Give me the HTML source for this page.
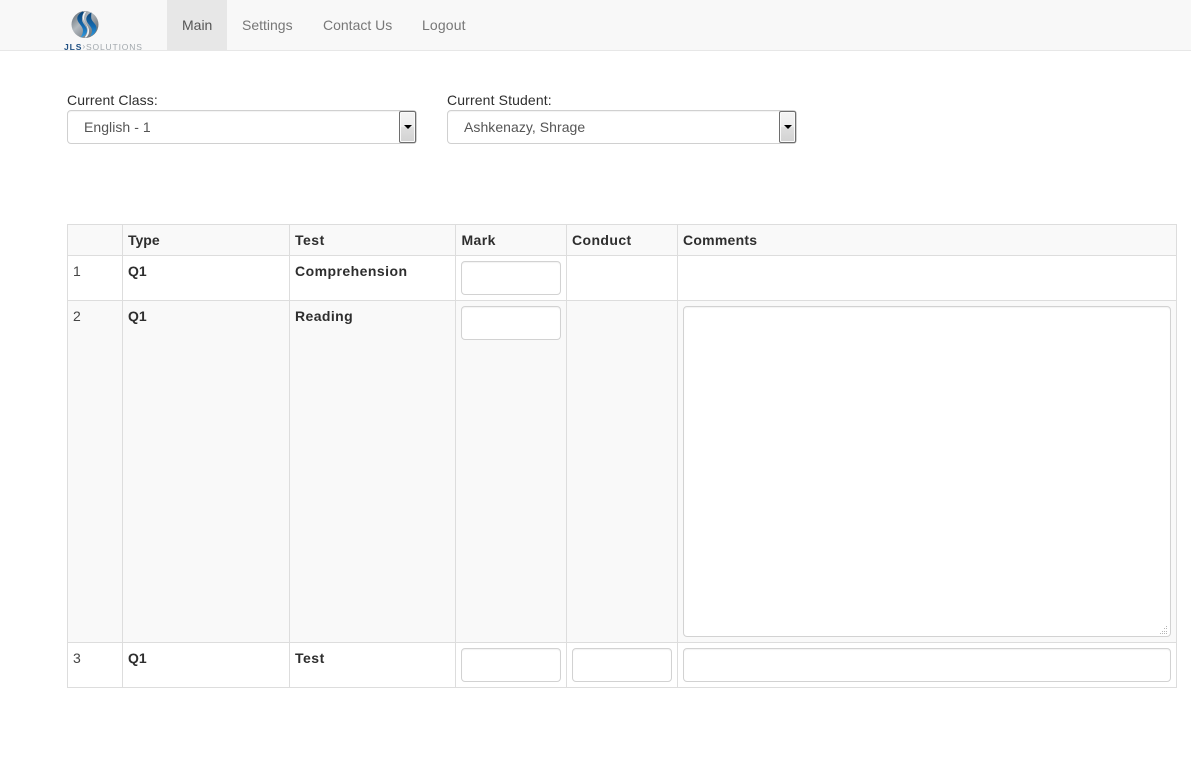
<!DOCTYPE html>
<html>
<head>
<meta charset="utf-8">
<style>
html,body{margin:0;padding:0;background:#fff;}
body{width:1191px;height:763px;position:relative;overflow:hidden;font-family:"Liberation Sans",sans-serif;font-size:14px;color:#2e2e2e;line-height:20px;}
.a{position:absolute;}
.nav{left:0;top:0;width:1191px;height:50px;background:#f8f8f8;border-bottom:1px solid #e7e7e7;}
.nl{position:absolute;top:15px;color:#777;white-space:nowrap;}
.active{position:absolute;left:167px;top:0;width:60px;height:50px;background:#e7e7e7;}
.sel{position:absolute;top:110px;width:350px;height:34px;box-sizing:border-box;border:1px solid #d0d0d0;border-radius:4px;background:#fff;box-shadow:inset 0 1px 1px rgba(0,0,0,.05);color:#555;}
.sel span{position:absolute;left:16px;top:6px;white-space:nowrap;letter-spacing:.05px;}
.btn{position:absolute;right:0;top:0;width:17px;height:32px;box-sizing:border-box;border:1px solid #6e6e6e;border-radius:2px;background:linear-gradient(#f4f4f4,#ececec 50%,#dedede 51%,#d2d2d2);box-shadow:inset 0 0 0 1px #fafafa;}
.btn:after{content:"";position:absolute;left:4px;top:13px;border-left:4px solid transparent;border-right:4px solid transparent;border-top:4px solid #000;}
.bg{position:absolute;background:#f9f9f9;}
.h{position:absolute;background:#ddd;height:1px;left:67px;width:1110px;}
.v{position:absolute;background:#ddd;width:1px;top:224px;height:464px;}
.t{position:absolute;white-space:nowrap;}
.b{font-weight:bold;}
.inp{position:absolute;box-sizing:border-box;border:1px solid #d2d2d2;border-radius:4px;background:#fff;height:34px;box-shadow:inset 0 1px 1px rgba(0,0,0,.05);}
</style>
</head>
<body>
<div class="a nav"></div>
<div class="active"></div>
<svg class="a" style="left:70px;top:10px" width="30" height="30" viewBox="0 0 30 30">
<defs>
<linearGradient id="g" x1="0" y1="0" x2="1" y2="1"><stop offset="0" stop-color="#59636c"/><stop offset=".4" stop-color="#b4babf"/><stop offset="1" stop-color="#4f5860"/></linearGradient>
<linearGradient id="bl" x1="0" y1="0" x2="0" y2="1"><stop offset="0" stop-color="#0b4477"/><stop offset=".6" stop-color="#156cb2"/><stop offset="1" stop-color="#2f9be0"/></linearGradient>
</defs>
<circle cx="15" cy="14.500" r="13.500" fill="url(#g)"/>
<path d="M12.500 1.500C9 3.500 6.500 6.500 7.500 10c1 3.500 5 6 5.500 10 .2 2.500-.8 5-2.500 7.500 3.500-1 6-3 6.500-6.500.5-4-4.500-7-5-11-.3-3 .5-5.500 2-7.500z" fill="url(#bl)"/>
<path d="M21.500 2.500C18 4 15.500 7 16.500 10.500c1 3.500 5 6 5.500 9.500.2 2.500-.5 4.500-2 6.500 4-2 6.500-5 6.500-8.500 0-4-4.500-6-5.200-9.500-.3-2 0-4 .2-6.500z" fill="url(#bl)"/>
<path d="M14.800 1.800C12.500 4 12 7 13.500 10c1.800 3.500 4.500 6.500 4 11-.3 2.500-1.500 4.500-3 6.500h1.500c2.300-1.700 3.300-4 3-7.500-.4-4-4.500-6.500-5-10.500-.3-2.500.7-5.200 2.300-7.700z" fill="#eef2f5"/>
</svg>
<div class="t" style="left:64px;top:42px;font-size:8.500px;line-height:10px;color:#1f4f82;font-weight:bold;letter-spacing:.9px;">JLS</div>
<div class="t" style="left:82.500px;top:42px;font-size:8px;line-height:10px;color:#9aa2a8;">›</div>
<div class="t" style="left:86px;top:42px;font-size:8.500px;line-height:10px;letter-spacing:.85px;color:#a2a8ad;">SOLUTIONS</div>
<div class="nl" style="left:182px;color:#555;">Main</div>
<div class="nl" style="left:242px;">Settings</div>
<div class="nl" style="left:323px;">Contact Us</div>
<div class="nl" style="left:422px;letter-spacing:.15px;">Logout</div>

<div class="t" style="left:67px;top:90px;letter-spacing:.1px;">Current Class:</div>
<div class="t" style="left:447px;top:90px;letter-spacing:.13px;">Current Student:</div>
<div class="sel" style="left:67px;"><span>English - 1</span><div class="btn"></div></div>
<div class="sel" style="left:447px;"><span>Ashkenazy, Shrage</span><div class="btn"></div></div>

<div class="bg" style="left:67px;top:224px;width:1110px;height:32px;"></div>
<div class="bg" style="left:67px;top:300px;width:1110px;height:343px;"></div>
<div class="h" style="top:224px;"></div>
<div class="h" style="top:255px;"></div>
<div class="h" style="top:300px;"></div>
<div class="h" style="top:642px;"></div>
<div class="h" style="top:687px;"></div>
<div class="v" style="left:67px;"></div>
<div class="v" style="left:122px;"></div>
<div class="v" style="left:289px;"></div>
<div class="v" style="left:455px;"></div>
<div class="v" style="left:566px;"></div>
<div class="v" style="left:677px;"></div>
<div class="v" style="left:1176px;"></div>

<div class="t b" style="left:128px;top:230px;">Type</div>
<div class="t b" style="left:295px;top:230px;letter-spacing:.5px;">Test</div>
<div class="t b" style="left:461.500px;top:230px;letter-spacing:.4px;">Mark</div>
<div class="t b" style="left:572px;top:230px;letter-spacing:.4px;">Conduct</div>
<div class="t b" style="left:683px;top:230px;letter-spacing:.25px;">Comments</div>

<div class="t" style="left:73px;top:261px;color:#444;">1</div>
<div class="t b" style="left:128px;top:261px;">Q1</div>
<div class="t b" style="left:295px;top:261px;letter-spacing:.46px;">Comprehension</div>
<div class="inp" style="left:461px;top:261px;width:100px;"></div>

<div class="t" style="left:73px;top:306px;color:#444;">2</div>
<div class="t b" style="left:128px;top:306px;">Q1</div>
<div class="t b" style="left:295px;top:306px;letter-spacing:.4px;">Reading</div>
<div class="inp" style="left:461px;top:306px;width:100px;"></div>
<div class="inp" style="left:683px;top:306px;width:488px;height:331px;"></div>
<svg class="a" style="left:1159px;top:625px" width="10" height="10" viewBox="0 0 10 10"><g fill="#b5b5b5"><rect x="7" y="1" width="1" height="1"/><rect x="5" y="3" width="1" height="1"/><rect x="7" y="3" width="1" height="1"/><rect x="3" y="6" width="1" height="1"/><rect x="5" y="6" width="1" height="1"/><rect x="7" y="6" width="1" height="1"/><rect x="1" y="8" width="1" height="1"/><rect x="3" y="8" width="1" height="1"/><rect x="5" y="8" width="1" height="1"/><rect x="7" y="8" width="1" height="1"/></g></svg>

<div class="t" style="left:73px;top:648px;color:#444;">3</div>
<div class="t b" style="left:128px;top:648px;">Q1</div>
<div class="t b" style="left:295px;top:648px;letter-spacing:.5px;">Test</div>
<div class="inp" style="left:461px;top:648px;width:100px;"></div>
<div class="inp" style="left:572px;top:648px;width:100px;"></div>
<div class="inp" style="left:683px;top:648px;width:488px;"></div>
</body>
</html>
